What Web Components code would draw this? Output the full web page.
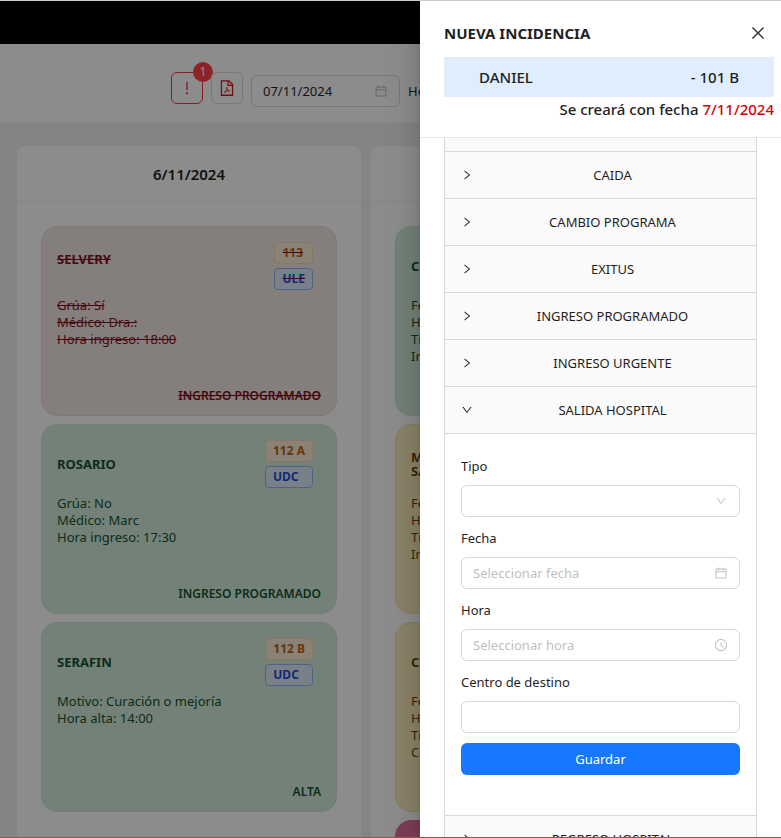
<!DOCTYPE html>
<html lang="es">
<head>
<meta charset="utf-8">
<title>Nueva incidencia</title>
<style>
  html, body { margin: 0; height: 100%; }
  body { font: 13px/22px "Noto Sans", "Open Sans", sans-serif; color: #1f1f1f; }
</style>
</head>
<body>
<app-shell>
  <tool-bar slot="bar"></tool-bar>
  <day-column slot="board" heading="6/11/2024">
    <patient-card tone="void" room="113" unit="ULE" kind="INGRESO PROGRAMADO">
      <span slot="name">SELVERY</span>Grúa: Sí<br>Médico: Dra.:<br>Hora ingreso: 18:00
    </patient-card>
    <patient-card tone="green" room="112 A" unit="UDC" kind="INGRESO PROGRAMADO">
      <span slot="name">ROSARIO</span>Grúa: No<br>Médico: Marc<br>Hora ingreso: 17:30
    </patient-card>
    <patient-card tone="green" room="112 B" unit="UDC" kind="ALTA">
      <span slot="name">SERAFIN</span>Motivo: Curación o mejoría<br>Hora alta: 14:00
    </patient-card>
  </day-column>
  <day-column slot="board">
    <patient-card tone="green">
      <span slot="name">C.</span>Fecha<br>Hora<br>Tipo<br>Inicio
    </patient-card>
    <patient-card tone="yellow">
      <span slot="name">M.<br>SA.</span>Fecha<br>Hora<br>Tipo<br>Inicio
    </patient-card>
    <patient-card tone="yellow">
      <span slot="name">C.</span>Fecha<br>Hora<br>Tipo<br>Centro
    </patient-card>
    <patient-card tone="pink"></patient-card>
  </day-column>
  <side-drawer slot="drawer">
    <collapse-item></collapse-item>
    <collapse-item label="CAIDA"></collapse-item>
    <collapse-item label="CAMBIO PROGRAMA"></collapse-item>
    <collapse-item label="EXITUS"></collapse-item>
    <collapse-item label="INGRESO PROGRAMADO"></collapse-item>
    <collapse-item label="INGRESO URGENTE"></collapse-item>
    <collapse-item label="SALIDA HOSPITAL" open><exit-form></exit-form></collapse-item>
    <collapse-item label="REGRESO HOSPITAL"></collapse-item>
  </side-drawer>
</app-shell>

<script>
const icons = {
  calendar: '<path d="M880 184H712v-64c0-4.400-3.600-8-8-8h-56c-4.400 0-8 3.600-8 8v64H384v-64c0-4.400-3.600-8-8-8h-56c-4.400 0-8 3.600-8 8v64H144c-17.700 0-32 14.300-32 32v664c0 17.700 14.300 32 32 32h736c17.700 0 32-14.300 32-32V216c0-17.700-14.300-32-32-32zm-40 656H184V460h656v380zM184 392V256h128v48c0 4.400 3.600 8 8 8h56c4.400 0 8-3.600 8-8v-48h256v48c0 4.400 3.600 8 8 8h56c4.400 0 8-3.600 8-8v-48h128v136H184z"/>',
  clock: '<path d="M512 64C264.600 64 64 264.600 64 512s200.600 448 448 448 448-200.600 448-448S759.400 64 512 64zm0 820c-205.400 0-372-166.600-372-372s166.600-372 372-372 372 166.600 372 372-166.600 372-372 372z"/><path d="M686.700 638.600L544.100 535.500V288c0-4.400-3.600-8-8-8H488c-4.400 0-8 3.600-8 8v275.400c0 2.600 1.200 5 3.300 6.500l165.400 120.600c3.600 2.600 8.600 1.800 11.200-1.700l28.600-39c2.600-3.700 1.800-8.700-1.800-11.200z"/>',
  down: '<path d="M884 256h-75c-5.100 0-9.900 2.500-12.900 6.600L512 654.200 227.900 262.600c-3-4.100-7.800-6.600-12.900-6.600h-75c-6.500 0-10.300 7.400-6.500 12.700l352.600 486.100c12.800 17.600 39 17.600 51.700 0l352.600-486.100c3.900-5.300.1-12.700-6.400-12.700z"/>',
  right: '<path d="M765.700 486.800L314.900 134.700A7.970 7.970 0 00302 141v77.300c0 4.900 2.300 9.600 6.100 12.600l360 281.100-360 281.100c-3.900 3-6.100 7.700-6.100 12.600V883c0 6.700 7.700 10.400 12.900 6.300l450.800-352.100a31.960 31.960 0 000-50.400z"/>',
  close: '<path d="M799.900 166.300c.1 0 .2.100.3.200l57.500 57.500a.9.900 0 010 .7L569.500 512l288.200 287.600a.9.900 0 010 .5l-57.600 57.600a.9.900 0 01-.5 0L512 569.500 224.400 857.700a.9.900 0 01-.5 0l-57.600-57.600a.9.900 0 010-.5L454.500 512 166.300 224.400a.9.900 0 010-.5l57.600-57.600a.9.900 0 01.5 0L512 454.500l287.600-288.200h.3z"/>',
  exclaim: '<path d="M448 804a64 64 0 10128 0 64 64 0 10-128 0zm32-168h64c4.400 0 8-3.600 8-8V164c0-4.400-3.600-8-8-8h-64c-4.400 0-8 3.600-8 8v464c0 4.400 3.600 8 8 8z"/>',
  pdf: '<path d="M531.300 574.400l.3-1.400c5.800-23.900 13.100-53.700 7.400-80.700-3.800-21.300-19.500-29.600-32.900-30.200-15.800-.7-29.900 8.300-33.400 21.400-6.600 24-.7 56.800 10.100 98.600-13.600 32.400-35.300 79.500-51.200 107.500-29.600 15.300-69.300 38.900-75.200 68.700-1.200 5.500.2 12.500 3.500 18.800 3.700 7 9.600 12.400 16.500 15 3 1.100 6.600 2 10.800 2 17.600 0 46.100-14.200 84.100-79.400 5.800-1.900 11.800-3.900 17.600-5.900 27.200-9.200 55.400-18.800 80.900-23.100 28.200 15.100 60.300 24.800 82.100 24.800 21.600 0 30.100-12.800 33.300-20.500 5.600-13.500 2.900-30.500-6.200-39.600-13.200-13-45.300-16.400-95.300-10.200-24.600-15-40.700-35.400-52.400-65.800zM421.600 726.300c-13.900 20.200-24.400 30.300-30.100 34.700 6.700-12.300 19.800-25.300 30.100-34.700zm87.600-235.500c5.200 8.900 4.500 35.800.5 49.400-4.900-19.900-5.600-48.100-2.700-51.400.8.100 1.500.7 2.200 2zm-1.600 120.500c10.700 18.500 24.200 34.400 39.100 46.200-21.600 4.900-41.300 13-58.900 20.200-4.200 1.700-8.300 3.400-12.300 5 13.300-24.100 24.400-51.400 32.100-71.400zm155.600 65.500c.1.200.2.500-.4.900h-.2l-.2.300c-.8.500-9 5.300-44.300-8.600 40.600-1.900 45 7.300 45.100 7.400zm191.400-388.200L639.400 73.400c-6-6-14.100-9.400-22.600-9.400H192c-17.700 0-32 14.300-32 32v832c0 17.700 14.300 32 32 32h640c17.700 0 32-14.300 32-32V311.300c0-8.500-3.400-16.700-9.400-22.700zM790.200 326H602V137.800L790.200 326zm1.800 562H232V136h302v216a42 42 0 0042 42h216v494z"/>'
};
const icon = (n, c = '') => `<svg class="${c}" viewBox="0 0 1024 1024" fill="currentColor" aria-hidden="true">${icons[n]}</svg>`;
const define = (name, render) => customElements.define(name, class extends HTMLElement {
  connectedCallback() {
    if (!this.shadowRoot) this.attachShadow({ mode: 'open' }).innerHTML = '<style>*{box-sizing:border-box}:host{box-sizing:border-box}</style>' + render(this);
  }
});

define('app-shell', () => `<style>
  :host { display: flex; flex-direction: column; position: relative; height: 100vh; overflow: hidden; background: #f0f0f0; border-top: 1px solid #ccc; border-bottom: 1px solid #93584c; }
  header { flex: none; height: 43px; background: #000; }
  main { flex: 1; min-height: 0; display: flex; gap: 10px; padding: 23px 17px 0; overflow: hidden; }
  .mask { position: absolute; inset: 0; background: rgba(0,0,0,.45); }
  slot[name=drawer] { display: block; position: absolute; inset: 0 0 0 auto; width: min(361px, 100%); }
</style>
<header></header><slot name="bar"></slot><main><slot name="board"></slot></main>
<div class="mask"></div><slot name="drawer"></slot>`);

define('tool-bar', () => `<style>
  :host { display: flex; align-items: flex-end; gap: 8px; flex: none; padding: 28px 0 15px 171px; background: #fff; border-bottom: 1px solid #f8f8f8; white-space: nowrap; }
  button { position: relative; width: 32px; height: 32px; margin: 0 0 3px; padding: 0; display: grid; place-items: center; flex: none; background: #fff; border: 1px solid #d9d9d9; border-radius: 6px; color: #cf1322; font: inherit; }
  button svg { width: 18px; height: 18px; }
  .alert { border-color: #f5374a; color: #f5374a; }
  .badge { position: absolute; top: -11px; right: -11px; width: 20px; height: 20px; border-radius: 50%; background: #ff4347; color: #fff; font-size: 12px; line-height: 20px; text-align: center; }
  .date { display: flex; align-items: center; width: 149px; height: 32px; flex: none; padding: 0 11px; border: 1px solid #d9d9d9; border-radius: 6px; }
  input { flex: 1; min-width: 0; padding: 0; border: 0; outline: 0; background: none; font: inherit; color: inherit; }
  .date svg { width: 14px; height: 14px; color: #bfbfbf; }
  span { line-height: 32px; }
</style>
<button class="alert" aria-label="Avisos">${icon('exclaim')}<span class="badge">1</span></button>
<button aria-label="PDF">${icon('pdf')}</button>
<label class="date"><input value="07/11/2024" aria-label="Fecha">${icon('calendar')}</label>
<span>Hoy</span>`);

define('day-column', el => `<style>
  :host { display: block; flex: 0 0 344px; background: #fff; border-radius: 8px 8px 0 0; }
  h2 { margin: 0; height: 56px; font-size: 15px; line-height: 56px; font-weight: 600; text-align: center; border-bottom: 1px solid #f0f0f0; }
  div { display: flex; flex-direction: column; gap: 8px; padding: 24px; }
</style>
<h2>${el.getAttribute('heading') || ''}</h2><div><slot></slot></div>`);

define('patient-card', el => {
  const a = n => el.getAttribute(n) || '';
  return `<style>
  :host { display: flex; flex-direction: column; height: 190px; padding: 15px 15px 11px; border-radius: 16px; border: 1px solid var(--line); background: var(--bg); color: var(--ink); line-height: 17px; }
  :host([tone=void]) { --bg: #f1e7e4; --line: #e6dcda; --ink: #7f1020; text-decoration: line-through; }
  :host([tone=green]) { --bg: #d2ecdb; --line: #cbe4d3; --ink: #14532d; }
  :host([tone=yellow]) { --bg: #fbefc0; --line: #f0e2b0; --ink: #713f12; }
  :host([tone=pink]) { --bg: #e0709c; --line: #e0709c; --ink: #831843; }
  .head { display: flex; justify-content: space-between; align-items: center; height: 48px; margin-bottom: 7px; font-weight: 700; line-height: 14px; }
  :host([tone=void]) .name { padding-bottom: 14px; }
  .tags { display: flex; flex-direction: column; gap: 4px; margin-right: 8px; font-size: 12px; }
  .tag { padding: 0 7px; line-height: 20px; border: 1px solid; border-radius: 4px; }
  .room { color: #c2610c; background: #fbecd9; border-color: #f7d9ae; }
  .unit { color: #1d4ed8; background: #deE9fb; border-color: #8fb4f5; }
  .kind { margin-top: auto; text-align: right; font-size: 12px; font-weight: 600; }
</style>
<div class="head"><div class="name"><slot name="name"></slot></div>${a('room') ? `<div class="tags"><span class="tag room">${a('room')}</span><span class="tag unit">${a('unit')}</span></div>` : ''}</div>
<div><slot></slot></div><div class="kind">${a('kind')}</div>`;
});

define('side-drawer', () => `<style>
  :host { display: flex; flex-direction: column; height: 100%; background: #fff; box-shadow: -6px 0 16px rgba(0,0,0,.08), -3px 0 6px -4px rgba(0,0,0,.12), -9px 0 28px 8px rgba(0,0,0,.05); }
  header { flex: none; padding: 16px 7px 15px 24px; font-size: 15px; line-height: 24px; font-weight: 500; border-bottom: 1px solid #e8e8e8; }
  .title { display: flex; align-items: center; justify-content: space-between; height: 32px; margin-bottom: 8px; }
  h1 { margin: 0; font-size: 15px; font-weight: 700; }
  button { display: grid; place-items: center; width: 32px; height: 32px; padding: 0; border: 0; background: none; color: #333; }
  svg { width: 18px; height: 18px; }
  .who { display: flex; justify-content: space-between; padding: 8px 35px; background: #dfedfd; }
  p { margin: 0; text-align: right; line-height: 25px; }
  b { font-weight: 500; color: #d9000d; }
  .body { flex: 1; min-height: 0; overflow: hidden; padding: 0 24px; }
  .panel { border: 1px solid #d9d9d9; border-top: 0; }
</style>
<header><div class="title"><h1>NUEVA INCIDENCIA</h1><button aria-label="Cerrar">${icon('close')}</button></div>
<div class="who"><span>DANIEL</span><span>- 101 B</span></div>
<p>Se creará con fecha <b>7/11/2024</b></p></header>
<div class="body"><div class="panel"><slot></slot></div></div>`);

define('collapse-item', el => {
  const label = el.getAttribute('label'), open = el.hasAttribute('open');
  return `<style>
  :host { display: block; border-bottom: 1px solid #d9d9d9; }
  button { display: flex; align-items: center; gap: 12px; width: 100%; padding: 12px 16px; border: 0; background: #fafafa; font: inherit; color: inherit; }
  button span { flex: 1; }
  svg { width: 12px; height: 12px; }
  .rest { height: 13px; background: #fafafa; }
  .content { border-top: 1px solid #d9d9d9; padding: 21px 16px 40px; }
</style>` + (label ? `<button aria-expanded="${open}">${icon(open ? 'down' : 'right')}<span>${label}</span></button>` : '<div class="rest"></div>')
  + (open ? '<div class="content"><slot></slot></div>' : '');
});

define('exit-form', () => `<style>
  form { display: grid; gap: 10px; }
  .field { display: grid; gap: 8px; }
  .box { display: grid; grid-template-columns: 1fr 36px; align-items: center; height: 32px; border: 1px solid #d9d9d9; border-radius: 6px; }
  input, select { grid-area: 1 / 1 / 2 / 3; width: 100%; height: 30px; padding: 0 11px; border: 0; outline: 0; background: none; font: inherit; color: inherit; appearance: none; }
  input::placeholder { color: #bfbfbf; opacity: 1; }
  svg { grid-area: 1 / 2; justify-self: center; width: 14px; height: 14px; color: #bfbfbf; pointer-events: none; }
  .small { width: 12px; height: 12px; }
  button { height: 32px; border: 0; border-radius: 6px; background: #1677ff; color: #fff; font: inherit; }
</style>
<form>
  <div class="field"><label for="tipo">Tipo</label><div class="box"><select id="tipo"><option></option></select>${icon('down', 'small')}</div></div>
  <div class="field"><label for="fecha">Fecha</label><div class="box"><input id="fecha" placeholder="Seleccionar fecha">${icon('calendar')}</div></div>
  <div class="field"><label for="hora">Hora</label><div class="box"><input id="hora" placeholder="Seleccionar hora">${icon('clock')}</div></div>
  <div class="field"><label for="centro">Centro de destino</label><div class="box"><input id="centro"></div></div>
  <button type="button">Guardar</button>
</form>`);
</script>
</body>
</html>
